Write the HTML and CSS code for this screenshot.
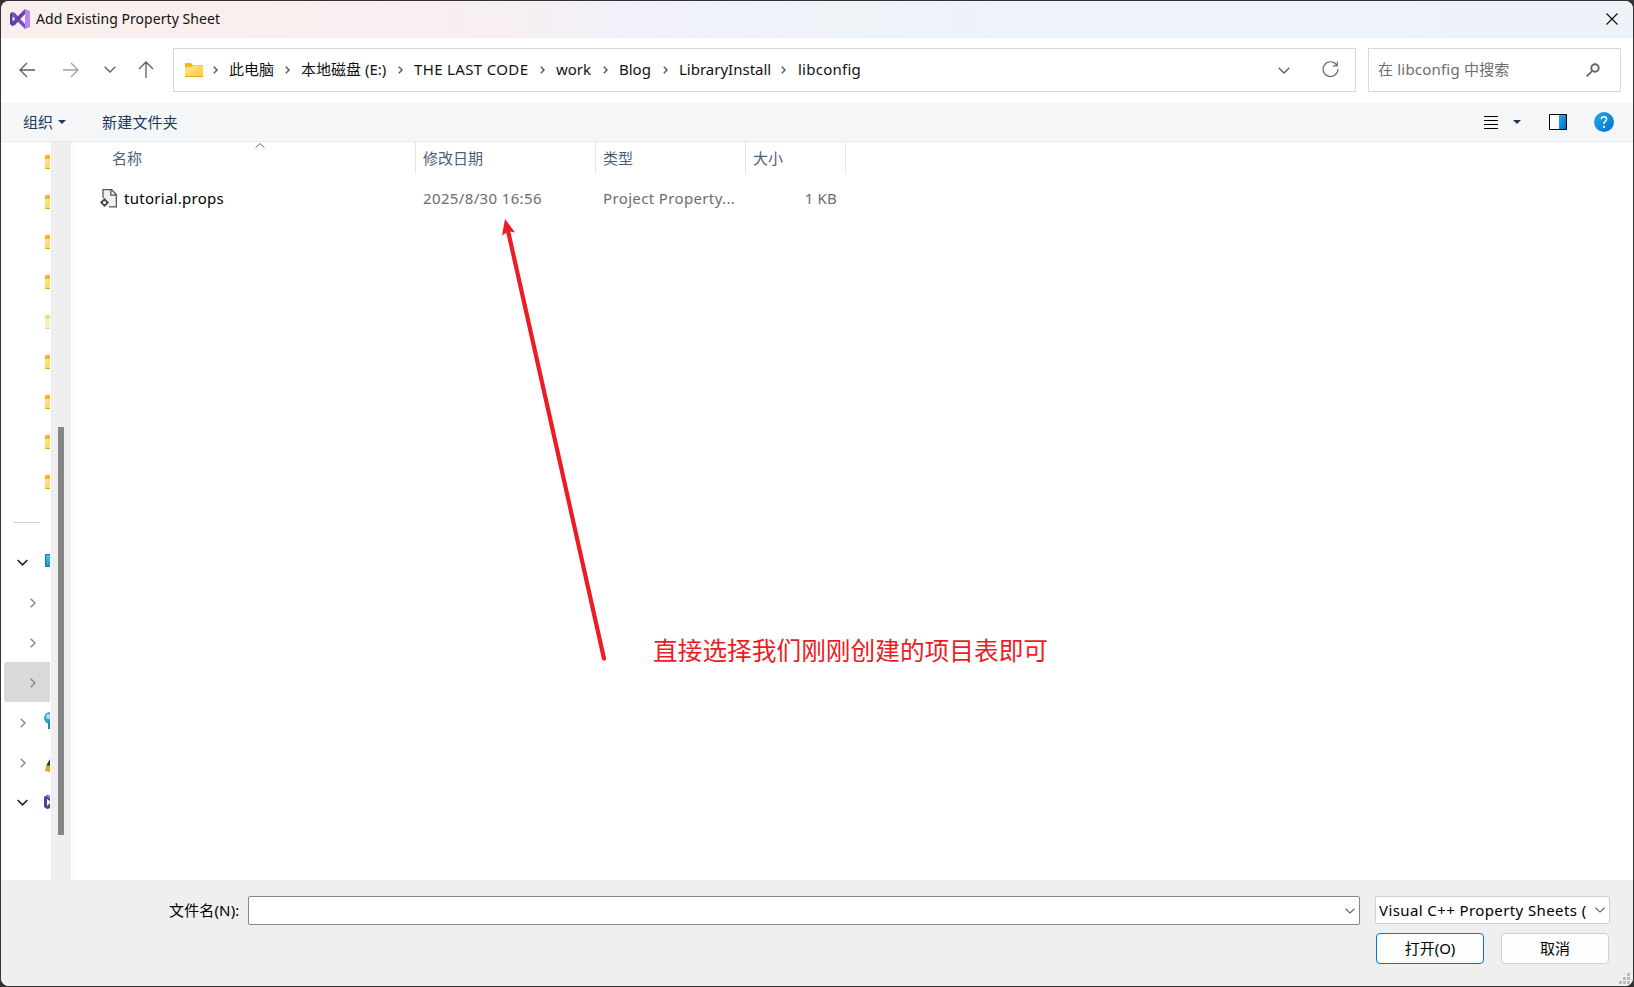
FILE: index.html
```html
<!DOCTYPE html>
<html lang="zh-CN">
<head>
    <meta charset="UTF-8">
    <title>Add Existing Property Sheet</title>
    <link rel="stylesheet" href="styles.css">
</head>
<body>
    <!-- shared icons -->
    <svg class="defs" width="0" height="0">
        <defs>
            <linearGradient id="folder-front" x1="0" y1="0" x2="1" y2="1">
                <stop offset="0" stop-color="#ffe69a"/>
                <stop offset="1" stop-color="#ffc937"/>
            </linearGradient>
            <linearGradient id="blue" x1="0" y1="0" x2="1" y2="1">
                <stop offset="0" stop-color="#27aaea"/>
                <stop offset="1" stop-color="#006fd1"/>
            </linearGradient>
            <linearGradient id="teal" x1="0" y1="0" x2="0" y2="1">
                <stop offset="0" stop-color="#35cbe0"/>
                <stop offset="1" stop-color="#2196d0"/>
            </linearGradient>
        </defs>
        <symbol id="folder" viewBox="0 0 18 14">
            <path d="M0 1q0-1 1-1h5l2 2h9q1 0 1 1v4H0z" fill="#f9b41c"/>
            <path d="M0 4h6.500l1.500-1.500h10V14H0z" fill="url(#folder-front)"/>
            <path d="M0 13h18v.5l-.5.500H.5l-.5-.5z" fill="#e8a520"/>
        </symbol>
        <symbol id="crumb-arrow" viewBox="0 0 5 8">
            <path d="M.8.800L4 4 .8 7.200" fill="none" stroke="#555" stroke-width="1.400"/>
        </symbol>
        <symbol id="right" viewBox="0 0 6 10">
            <path d="M.7.700L5 5 .7 9.300" fill="none" stroke="#8a8a8a" stroke-width="1.500"/>
        </symbol>
        <symbol id="down" viewBox="0 0 12 7">
            <path d="M.7.800L6 6 11.300.8" fill="none" stroke="currentColor" stroke-width="var(--w)"/>
        </symbol>
        <symbol id="vs" viewBox="0 0 20 20">
            <path d="M0 5l2-2 4 2v10l-4 2-2-2z" fill="#52409b"/>
            <path d="M2 3l3 1 10 11v5L2 7z" fill="#7a54ba"/>
            <path d="M2 17l3-1L15 5V0L2 13z" fill="#6645a8"/>
            <path d="M15 0l5 2v16l-5 2z" fill="#bd85f4"/>
            <path d="M2.500 7.500L5.200 10l-2.700 2.500zM15 6.500v7L10.500 10z" fill="#f9f0ee"/>
        </symbol>
    </svg>

    <div class="dialog">
        <header class="titlebar">
            <svg class="logo" width="20" height="20"><use href="#vs"/></svg>
            <h1>Add Existing Property Sheet</h1>
            <svg class="close" width="12" height="12" viewBox="0 0 12 12"><path d="M.5.500l11 11M11.500.5l-11 11" fill="none" stroke="#111" stroke-width="1.200"/></svg>
        </header>

        <div class="navbar">
            <svg class="back" width="16" height="16" viewBox="0 0 16 16"><path d="M8 1L1 8l7 7M1 8h15" fill="none" stroke="#5c5c5c" stroke-width="1.300"/></svg>
            <svg class="forward" width="16" height="16" viewBox="0 0 16 16"><path d="M8 1l7 7-7 7M15 8H0" fill="none" stroke="#a0a0a0" stroke-width="1.300"/></svg>
            <svg class="recent" width="12" height="7"><use href="#down"/></svg>
            <svg class="up" width="16" height="17" viewBox="0 0 16 17"><path d="M1 8l7-7 7 7M8 1v16" fill="none" stroke="#5c5c5c" stroke-width="1.300"/></svg>

            <div class="address">
                <svg class="address-folder" width="18" height="14"><use href="#folder"/></svg>
                <div class="crumbs">
                    <span class="crumb"><svg width="5" height="8"><use href="#crumb-arrow"/></svg>此电脑</span>
                    <span class="crumb"><svg width="5" height="8"><use href="#crumb-arrow"/></svg>本地磁盘 (E:)</span>
                    <span class="crumb caps"><svg width="5" height="8"><use href="#crumb-arrow"/></svg>THE LAST CODE</span>
                    <span class="crumb"><svg width="5" height="8"><use href="#crumb-arrow"/></svg>work</span>
                    <span class="crumb"><svg width="5" height="8"><use href="#crumb-arrow"/></svg>Blog</span>
                    <span class="crumb"><svg width="5" height="8"><use href="#crumb-arrow"/></svg>LibraryInstall</span>
                    <span class="crumb current"><svg width="5" height="8"><use href="#crumb-arrow"/></svg>libconfig</span>
                </div>
                <svg class="history" width="12" height="7"><use href="#down"/></svg>
                <svg class="refresh" width="17" height="17" viewBox="0 0 17 17"><path d="M14.500 3.800A7.400 7.400 0 1 0 15.900 8M15.300.5v4.300H11" fill="none" stroke="#6a6a6a" stroke-width="1.200"/></svg>
            </div>

            <div class="search">
                <span>在 libconfig 中搜索</span>
                <svg width="14" height="14" viewBox="0 0 14 14"><circle cx="9" cy="5" r="3.700" fill="none" stroke="#666" stroke-width="2"/><path d="M6.300 7.800L.6 13.400" stroke="#666" stroke-width="1.800"/></svg>
            </div>
        </div>

        <div class="toolbar">
            <span>组织</span>
            <i class="triangle"></i>
            <span class="new-folder">新建文件夹</span>
            <svg class="view" width="14" height="13" viewBox="0 0 14 13"><path d="M0 .5h14M0 4.500h14M0 8.500h14M0 12.500h14" stroke="#000"/></svg>
            <i class="triangle"></i>
            <svg class="pane" width="18" height="16" viewBox="0 0 18 16"><path d="M.5.500h17v15H.5z" fill="#fff" stroke="#000"/><path d="M10 1h7v14h-7z" fill="url(#blue)"/></svg>
            <svg class="help" width="20" height="20" viewBox="0 0 20 20"><circle cx="10" cy="10" r="10" fill="url(#blue)"/><path d="M7.300 7.300Q7.400 4.800 10 4.800t2.600 2.400Q12.600 8.500 11 9.600T10 12" fill="none" stroke="#fff" stroke-width="1.500"/><circle cx="10" cy="14.900" r="1.100" fill="#fff"/></svg>
        </div>

        <main class="content">
            <nav class="tree">
                <div class="node"><svg width="18" height="14"><use href="#folder"/></svg></div>
                <div class="node"><svg width="18" height="14"><use href="#folder"/></svg></div>
                <div class="node"><svg width="18" height="14"><use href="#folder"/></svg></div>
                <div class="node"><svg width="18" height="14"><use href="#folder"/></svg></div>
                <div class="node faded"><svg width="18" height="14"><use href="#folder"/></svg></div>
                <div class="node"><svg width="18" height="14"><use href="#folder"/></svg></div>
                <div class="node"><svg width="18" height="14"><use href="#folder"/></svg></div>
                <div class="node"><svg width="18" height="14"><use href="#folder"/></svg></div>
                <div class="node"><svg width="18" height="14"><use href="#folder"/></svg></div>
                <div class="node divider"></div>
                <div class="node open">
                    <svg class="toggle" width="12" height="7"><use href="#down"/></svg>
                    <svg class="pc" width="18" height="13" viewBox="0 0 18 13"><path d="M.5.500h17v12H.5z" fill="url(#teal)" stroke="#16779a"/></svg>
                </div>
                <div class="node child"><svg class="toggle" width="6" height="10"><use href="#right"/></svg></div>
                <div class="node child"><svg class="toggle" width="6" height="10"><use href="#right"/></svg></div>
                <div class="node child selected"><svg class="toggle" width="6" height="10"><use href="#right"/></svg></div>
                <div class="node closed">
                    <svg class="toggle" width="6" height="10"><use href="#right"/></svg>
                    <svg width="18" height="18" viewBox="0 0 18 18"><circle cx="6" cy="6" r="6" fill="#3b9fcb"/><circle cx="4.500" cy="4.500" r="2.500" fill="#a9dcf1"/><path d="M4 9h5v8H4z" fill="#188fb0"/></svg>
                </div>
                <div class="node closed linux">
                    <svg class="toggle" width="6" height="10"><use href="#right"/></svg>
                    <svg width="18" height="14" viewBox="0 0 18 14"><path d="M5 0L1.500 6v5H8V0z" fill="#333"/><path d="M1.500 6L5 7v6L0 12z" fill="#dba514"/></svg>
                </div>
                <div class="node open">
                    <svg class="toggle" width="12" height="7"><use href="#down"/></svg>
                    <svg class="vs-node" width="16" height="14" viewBox="0 0 16 14"><path d="M0 2l3-2 4 1v12l-4 1-3-2z" fill="#5b3c9c"/><path d="M2 1l5-1v4z" fill="#a678df"/><path d="M3 4l4 3-4 4z" fill="#fff"/></svg>
                </div>
            </nav>
            <div class="scrollbar"><div class="thumb"></div></div>

            <section class="files">
                <div class="row head">
                    <span>名称<svg class="sort" width="10" height="5" viewBox="0 0 10 5"><path d="M.5 4.700L5 .6l4.500 4.100" fill="none" stroke="#666"/></svg></span>
                    <span>修改日期</span>
                    <span>类型</span>
                    <span>大小</span>
                </div>
                <div class="row file">
                    <span class="name">
                        <svg width="17" height="19" viewBox="0 0 17 19"><path d="M3 .6h8.500l4.900 4.900v12.400H3z" fill="#f0f0f0"/><path d="M3 9V.6h8.500l4.900 4.900v12.400H9M10.800.8v5.400h5.400" fill="none" stroke="#555" stroke-width="1.300"/><path d="M4.500 9L9 13.500 4.500 18 0 13.500z" fill="#444"/><circle cx="4.500" cy="13.500" r="1.500" fill="#fff"/></svg>
                        tutorial.props
                    </span>
                    <span class="date">2025/8/30 16:56</span>
                    <span class="type">Project Property...</span>
                    <span class="size">1 KB</span>
                </div>
            </section>
        </main>

        <footer class="footer">
            <label>文件名(N):</label>
            <div class="filename"><svg width="10" height="6" viewBox="0 0 12 7"><use href="#down"/></svg></div>
            <div class="side">
                <div class="filter"><span>Visual C++ Property Sheets (</span><svg width="10" height="6" viewBox="0 0 12 7"><use href="#down"/></svg></div>
                <div class="buttons">
                    <button class="primary">打开(O)</button>
                    <button>取消</button>
                </div>
            </div>
            <svg class="grip" width="11" height="11" viewBox="0 0 11 11"><path d="M8 0h3v3H8zM4 4h3v3H4zM8 4h3v3H8zM0 8h3v3H0zM4 8h3v3H4zM8 8h3v3H8z" fill="#bdbdbd"/></svg>
        </footer>

        <!-- annotation over the file list -->
        <svg class="pointer" width="110" height="450" viewBox="0 0 110 450">
            <path d="M7.500 18L103 443.500" stroke="#ed1c24" stroke-width="4.200" stroke-linecap="round"/>
            <path d="M4 4L14 17.500 7.500 16.200 1 20.500z" fill="#ed1c24"/>
        </svg>
        <p class="note">直接选择我们刚刚创建的项目表即可</p>
    </div>
</body>
</html>
```
FILE: styles.css
```css
* {
    box-sizing: border-box;
}
body {
    margin: 0;
    padding: 1px;
    height: 987px;
    overflow: hidden;
    background: #333234;
    font-family: "Noto Sans", "Noto Sans CJK SC", sans-serif;
    font-size: 15px;
    line-height: 20px;
    color: #111;
}
svg {
    display: block;
    flex: none;
}
.defs {
    position: absolute;
}
.dialog {
    position: relative;
    display: flex;
    flex-direction: column;
    height: 985px;
    border-radius: 8px;
    overflow: hidden;
    background: #fff;
    --w: 1.3;
}

/* title */
.titlebar {
    display: flex;
    align-items: center;
    height: 37px;
    padding: 0 15px 1px 9px;
    background: linear-gradient(to right, #f9f0ed 0, #f9eef0 430px, #eff1fb 700px, #eef3f7 840px, #edf2fb 1000px, #edf2fb 1400px, #edf2f7 100%);
}
.titlebar h1 {
    flex: 1;
    margin: 0 0 0 6px;
    font-size: 14px;
    font-weight: normal;
    letter-spacing: 0.05px;
}

/* navigation */
.navbar {
    display: flex;
    align-items: center;
    height: 65px;
    padding: 0 12px 2px 18px;
    color: #5c5c5c;
}
.forward {
    margin-left: 28px;
}
.recent {
    margin-left: 25px;
}
.up {
    margin: 0 19px 0 22px;
}
.address,
.search {
    display: flex;
    align-items: center;
    height: 44px;
    border: 1px solid #d9d9d9;
}
.address {
    width: 1183px;
    padding: 0 16px 0 11px;
}
.crumbs {
    display: grid;
    grid-template-columns: 72px 113px 142px 63px 60px 118px auto;
    margin-left: 10px;
    padding-bottom: 2px;
    flex: 1;
    color: #111;
}
.crumb {
    display: flex;
    align-items: center;
    gap: 11px;
    white-space: nowrap;
}
.crumb svg {
    margin-top: 2px;
}
.caps {
    letter-spacing: 0.35px;
}
.current {
    gap: 12px;
    letter-spacing: 0.25px;
}
.history {
    margin-top: 2px;
}
.refresh {
    margin-left: 32px;
}
.search {
    flex: 1;
    margin-left: 12px;
    padding: 0 20px 0 9px;
    justify-content: space-between;
    color: #6d6d6d;
}
.search span {
    margin-top: -1px;
    letter-spacing: 0.2px;
}

/* toolbar */
.toolbar {
    display: flex;
    align-items: center;
    height: 39px;
    padding: 0 19px 0 22px;
    background: #f4f6f8;
    border-bottom: 1px solid #e5e7ea;
    color: #1e395b;
}
.triangle {
    margin-left: 5px;
    border: 4px solid transparent;
    border-top-color: #1e395b;
    border-bottom: 0;
}
.new-folder {
    margin-left: 36px;
    letter-spacing: 0.2px;
}
.view {
    margin: 0 10px 0 auto;
}
.pane {
    margin: 0 27px 0 28px;
}

/* tree and file list */
.content {
    display: flex;
    flex: 1;
    min-height: 0;
}
.tree {
    width: 49px;
    margin-right: 1px;
    overflow: hidden;
}
.node {
    display: flex;
    align-items: center;
    height: 40px;
    padding-left: 44px;
}
.node.faded svg {
    opacity: 0.5;
}
.divider::before {
    content: "";
    flex: none;
    width: 26px;
    height: 1px;
    margin-left: -31px;
    background: #d2d2d2;
}
.node.open {
    padding-left: 16px;
    color: #222;
    --w: 1.8;
}
.open .toggle {
    width: 11px;
    margin-right: 17px;
}
.node.closed {
    padding-left: 19px;
}
.closed .toggle {
    margin-right: 18px;
}
.closed svg:last-child {
    margin-top: -3px;
}
.linux svg:last-child {
    margin: 8px 0 0 1px;
}
.node.child {
    padding-left: 29px;
}
.child .toggle,
.closed .toggle {
    position: relative;
    top: 0.5px;
}
.node.selected {
    margin-left: 3px;
    padding-left: 26px;
    border-radius: 3px 0 0 3px;
    background: #d9d9d9;
}
.pc {
    margin-top: -3px;
}
.vs-node {
    margin-left: -1px;
}
.scrollbar {
    width: 20px;
    padding: 285px 7px 0;
    background: #efefef;
}
.thumb {
    height: 408px;
    background: #868686;
}
.files {
    flex: 1;
    margin-left: 2px;
    border-left: 1px solid #f4f4f4;
}
.row {
    display: grid;
    grid-template-columns: 342px 180px 150px 100px;
}
.head {
    height: 32px;
    color: #4c607a;
}
.head span {
    position: relative;
    padding: 6px 0 0 7px;
    border-right: 1px solid #e5e5e5;
}
.head span:first-child {
    padding-left: 38px;
}
.sort {
    position: absolute;
    left: 181px;
    top: 1px;
}
.file {
    height: 40px;
    margin-top: 4px;
    align-items: center;
    color: #6d6d6d;
}
.file span {
    padding-left: 7px;
    letter-spacing: 0.36px;
}
.file .name {
    display: flex;
    align-items: center;
    gap: 7px;
    padding-left: 26px;
    color: #000;
    letter-spacing: 0.28px;
}
.file .size {
    padding-right: 9px;
    text-align: right;
    letter-spacing: 0.2px;
}

/* footer */
.footer {
    position: relative;
    display: flex;
    height: 106px;
    padding: 16px 23px 0 168px;
    background: #efefef;
    color: #000;
}
.footer svg {
    color: #555;
}
.footer label {
    width: 79px;
    padding-top: 4px;
    letter-spacing: 0.15px;
}
.filename,
.filter {
    display: flex;
    align-items: center;
    justify-content: flex-end;
    background: #fff;
}
.filename {
    width: 1112px;
    height: 29px;
    padding-right: 4px;
    border: 1px solid #868686;
    border-radius: 2px;
}
.side {
    flex: 1;
    margin-left: 15px;
}
.filter {
    height: 28px;
    padding: 0 4px 0 3px;
    border: 1px solid #d0d0d0;
    border-radius: 2px;
    justify-content: space-between;
    white-space: nowrap;
    letter-spacing: 0.4px;
}
.buttons {
    display: flex;
    gap: 17px;
    margin: 9px 1px 0;
}
button {
    flex: 1;
    height: 31px;
    padding: 0 0 2px;
    border: 1px solid #d0d0d0;
    border-radius: 4px;
    background: #fdfdfd;
    color: #000;
    font: inherit;
}
button.primary {
    border-color: #0078d4;
}
.grip {
    position: absolute;
    right: 3px;
    bottom: 2px;
}

/* annotation */
.pointer {
    position: absolute;
    left: 500px;
    top: 214px;
}
.note {
    position: absolute;
    left: 652px;
    top: 634px;
    margin: 0;
    color: #ed1c24;
    font-size: 24.7px;
    line-height: 32px;
    white-space: nowrap;
}
```
